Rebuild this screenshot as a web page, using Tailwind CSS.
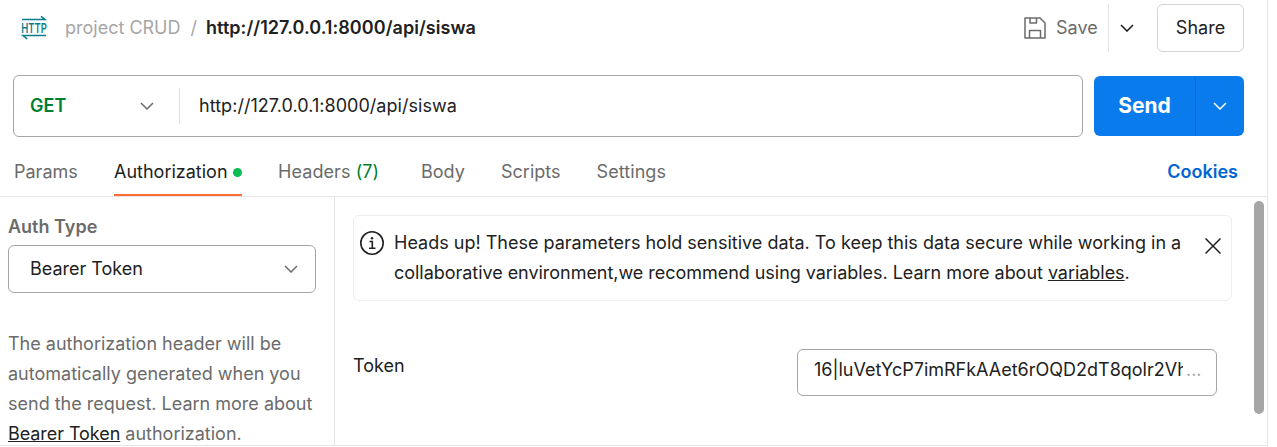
<!DOCTYPE html>
<html lang="en">
<head>
<meta charset="utf-8">
<title>Request</title>
<script src="https://cdn.jsdelivr.net/npm/@tailwindcss/browser@4"></script>
</head>
<body class="bg-white overflow-hidden">
<div class="w-[1268px] h-[447px] border-r border-[#e6e6e6] flex flex-col overflow-hidden font-['Inter',sans-serif] text-[18px] leading-[30px] text-[#212121]">
  <header class="h-14 pl-[21px] pr-[23px] flex items-center shrink-0">
    <svg class="w-[26px] h-[26px] shrink-0 overflow-visible" viewBox="0 0 26 26" fill="none" stroke="#0a7f8c" stroke-width="1.6">
      <path d="M1 4.500H24L20 1.300M25 20.500H2L6.300 24"/>
      <text x="0.300" y="17.800" textLength="25.500" lengthAdjust="spacingAndGlyphs" font-family="Inter" font-size="13.500" font-weight="600" fill="#0a7f8c" stroke="none">HTTP</text>
    </svg>
    <span class="ml-[18px] text-[#a6a6a6]">project CRUD</span>
    <span class="ml-[10px] text-[#a6a6a6]">/</span>
    <span class="ml-[9px] font-semibold tracking-[0.05px]">http://127.0.0.1:8000/api/siswa</span>
    <div class="ml-auto flex items-center h-12">
      <svg class="w-[22px] h-[22px]" viewBox="0 0 22 22" fill="none" stroke="#6b6b6b" stroke-width="1.500" stroke-linejoin="round">
        <path d="M1 1H16L21 6V21H1ZM6 1V6H12.500V1M5.500 21V13.500H16.500V21"/>
      </svg>
      <span class="ml-[10px] w-[42px] text-[#6b6b6b]">Save</span>
      <div class="ml-[10px] h-12 border-l border-[#e6e6e6]"></div>
      <svg class="ml-[11px] w-[14px] h-2" viewBox="0 0 14 8" fill="none" stroke="#212121" stroke-width="1.600"><path d="M1 1L7 7L13 1"/></svg>
      <div class="ml-[23px] w-[87px] h-12 border border-[#d4d4d4] rounded-md flex items-center justify-center">Share</div>
    </div>
  </header>
  <div class="h-[81px] pt-[19px] pl-[13px] pr-[23px] flex gap-[11px] shrink-0">
    <div class="w-[1070px] h-[62px] border border-[#a6a6a6] rounded-md flex items-center">
      <span class="ml-4 w-[110px] font-semibold text-[#007f31]">GET</span>
      <svg class="w-[14px] h-2" viewBox="0 0 14 8" fill="none" stroke="#6b6b6b" stroke-width="1.500"><path d="M1 1L7 7L13 1"/></svg>
      <div class="ml-[25px] h-9 border-l border-[#e0e0e0]"></div>
      <span class="ml-[19px] tracking-[0.04px]">http://127.0.0.1:8000/api/siswa</span>
    </div>
    <div class="mt-px w-[150px] h-[60px] rounded-md bg-[#097bed] text-white flex items-center">
      <span class="w-[101px] text-center text-[21px] font-bold">Send</span>
      <div class="h-full border-l border-[#0b6bd0]"></div>
      <svg class="ml-[17px] w-[14px] h-2" viewBox="0 0 14 8" fill="none" stroke="#fff" stroke-width="1.500"><path d="M1 1L7 7L13 1"/></svg>
    </div>
  </div>
  <nav class="h-[60px] border-b border-[#e6e6e6] flex items-end pl-[14px] pr-[29px] shrink-0 text-[#6b6b6b]">
    <span class="w-[100px] pb-[9px]">Params</span>
    <div class="w-[128px] border-b-2 border-[#ff6c37] pb-[7px] flex items-center justify-between text-[#212121]"><span>Authorization</span><i class="w-[9px] h-[9px] rounded-full bg-[#0cbb52]"></i></div>
    <span class="ml-[36px] w-[143px] pb-[9px] tracking-[0.08px]">Headers <span class="text-[#007f31]">(7)</span></span>
    <span class="w-[80px] pb-[9px]">Body</span>
    <span class="w-[95.500px] pb-[9px]">Scripts</span>
    <span class="pb-[9px] tracking-[0.08px]">Settings</span>
    <span class="ml-auto pb-[9px] font-semibold text-[#0265d2]">Cookies</span>
  </nav>
  <div class="h-[249px] border-b border-[#e6e6e6] flex shrink-0">
    <aside class="w-[335px] border-r border-[#e6e6e6] pl-2 pt-[15px] shrink-0">
      <div class="font-semibold text-[#6b6b6b]">Auth Type</div>
      <div class="mt-[3px] w-[308px] h-12 border border-[#a6a6a6] rounded-md flex items-center justify-between pl-[21px] pr-[17px]">
        <span>Bearer Token</span>
        <svg class="w-[14px] h-2" viewBox="0 0 14 8" fill="none" stroke="#6b6b6b" stroke-width="1.500"><path d="M1 1L7 7L13 1"/></svg>
      </div>
      <p class="mt-9 text-[#6b6b6b] whitespace-nowrap">The authorization header will be<br>automatically generated when you<br>send the request. Learn more about<br><a class="text-[#212121] underline underline-offset-1 decoration-1 tracking-[-0.06px]">Bearer Token</a> authorization.</p>
    </aside>
    <main class="pl-[18px] pt-[18px] w-[897px] shrink-0">
      <div class="w-[879px] h-[86px] border border-[#ededed] rounded-md flex pl-[6px] pt-[12px]">
        <svg class="mt-[3px] w-6 h-6" viewBox="0 0 24 24" fill="none" stroke="#212121" stroke-width="1.600"><circle cx="12" cy="12" r="11.200"/><path d="M9.500 10.500H12.300V17M9 17.200H15.500"/><circle cx="12" cy="7.300" r="1.200" fill="#212121" stroke="none"/></svg>
        <p class="ml-[10px] w-[811px] whitespace-nowrap">Heads up! These parameters hold sensitive data. To keep this data secure while working in a<br><span class="tracking-[-0.036px]">collaborative environment,we recommend using variables. Learn more about <a class="underline underline-offset-1 decoration-1">variables</a>.</span></p>
        <svg class="mt-[10px] w-4 h-4" viewBox="0 0 16 16" fill="none" stroke="#212121" stroke-width="1.500"><path d="M0.500 0.500L15.500 15.500M15.500 0.500L0.500 15.500"/></svg>
      </div>
      <div class="mt-12 flex">
        <span class="w-[444px] mt-[2px]">Token</span>
        <div class="w-[420px] h-[47px] border border-[#a6a6a6] rounded-md pl-4 pt-[5px] flex">
          <span class="w-[369px] overflow-hidden whitespace-nowrap">16|luVetYcP7imRFkAAet6rOQD2dT8qolr2Vh</span><span class="ml-[3px] text-[#a6a6a6]">...</span>
        </div>
      </div>
    </main>
    <div class="ml-[22px] mt-1 w-[10px] h-[213px] rounded-full bg-[#a6a6a6]"></div>
  </div>
</div>
</body>
</html>
